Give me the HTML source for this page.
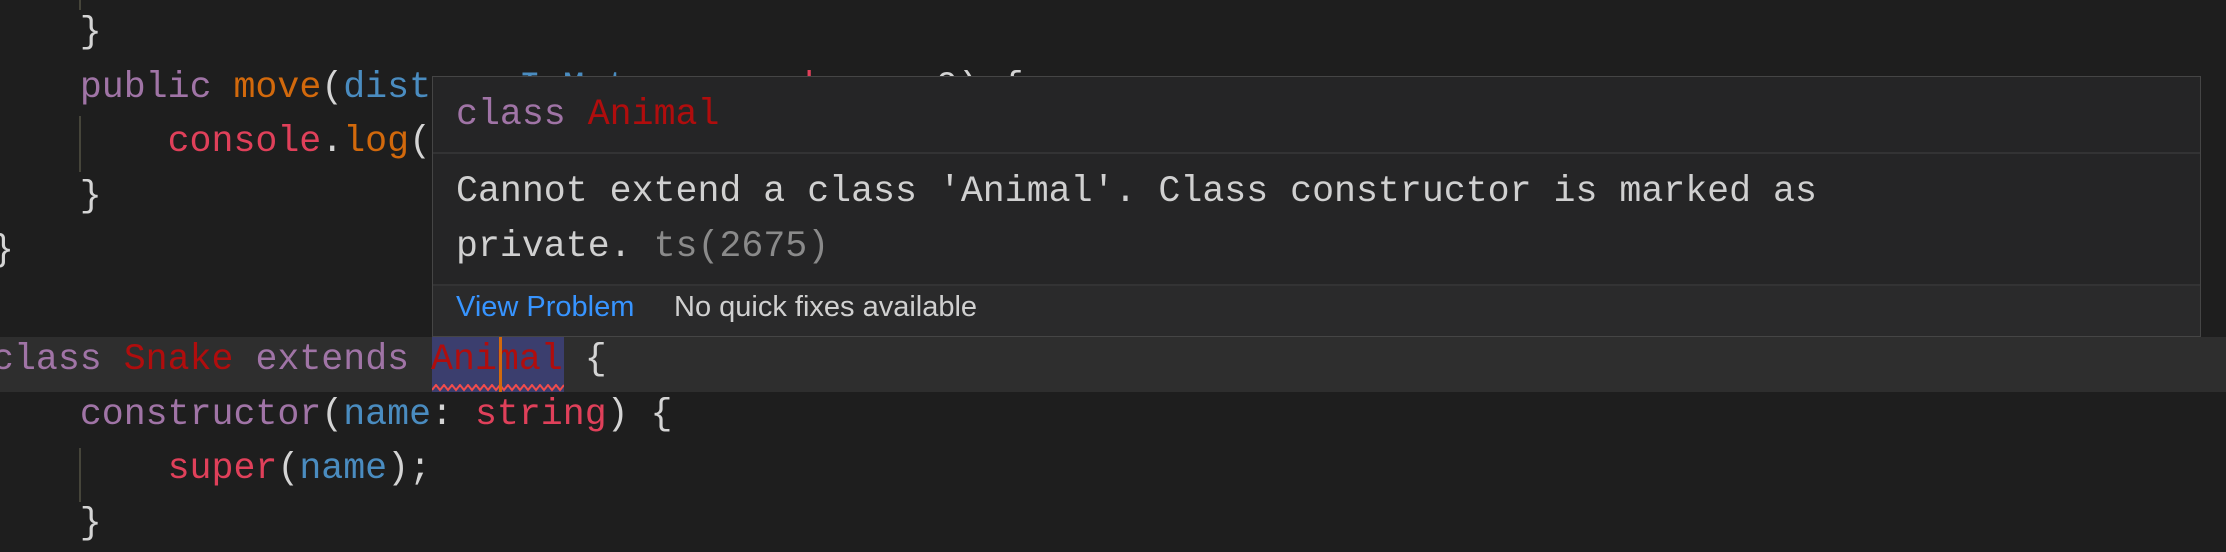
<!DOCTYPE html>
<html><head><meta charset="utf-8"><style>
html,body{margin:0;padding:0;}
body{width:2226px;height:534px;background:#1e1e1e;position:relative;overflow:hidden;font-family:"Liberation Mono",monospace;}
.l{position:absolute;left:-8px;height:54.5px;line-height:54.5px;font-size:36.6px;white-space:pre;color:#d4d4d4;}
.p{color:#a074a6}.o{color:#d2690c}.b{color:#4a8cc0}.r{color:#e0405a}.d{color:#b00d0d}.g{color:#d4d4d4}
.guide{position:absolute;left:79px;width:2px;background:#46453a;}
.cur{position:absolute;left:0;top:337px;width:2226px;height:55px;background:#2e2e2e;}
.sel{position:absolute;left:432px;top:337px;width:132px;height:55px;background:#3b3e6e;}
.caret{position:absolute;left:499px;top:337px;width:3px;height:55px;background:#d2690c;}
.hover{position:absolute;left:432px;top:76px;width:1767px;height:259px;background:#252526;border:1px solid #454545;}
.hl{position:absolute;left:23px;font-size:36.6px;white-space:pre;color:#d0d0d0;}
.sep{position:absolute;left:0;right:0;height:2px;background:#333334;}
.foot{position:absolute;left:0;right:0;top:207px;bottom:0;background:#2a2a2b;border-top:2px solid #333334;font-family:"Liberation Sans",sans-serif;font-size:29px;}
</style></head><body>
<div class="guide" style="top:0;height:10px"></div>
<div class="guide" style="top:116px;height:56px"></div>
<div class="guide" style="top:448px;height:54px"></div>
<div class="cur"></div>
<div class="sel"></div>
<div class="l" style="top:-48px">    }</div>
<div class="l" style="top:6px">    }</div>
<div class="l" style="top:61px">    <span class="p">public</span> <span class="o">move</span>(<span class="b">distanceInMeters</span>: <span class="r">number</span> = <span class="g">0</span>) {</div>
<div class="l" style="top:115px">        <span class="r">console</span>.<span class="o">log</span>(`Animal moved ${distanceInMeters}m.`);</div>
<div class="l" style="top:170px">    }</div>
<div class="l" style="top:224px">}</div>
<div class="l" style="top:333px"><span class="p">class</span> <span class="d">Snake</span> <span class="p">extends</span> <span class="d">Animal</span> {</div>
<svg style="position:absolute;left:432px;top:384px" width="132" height="8"><polyline fill="none" stroke="#f14c4c" stroke-width="2" points="0,6 4,1 8,6 12,1 16,6 20,1 24,6 28,1 32,6 36,1 40,6 44,1 48,6 52,1 56,6 60,1 64,6 68,1 72,6 76,1 80,6 84,1 88,6 92,1 96,6 100,1 104,6 108,1 112,6 116,1 120,6 124,1 128,6 132,1"/></svg>
<div class="caret"></div>
<div class="l" style="top:388px">    <span class="p">constructor</span>(<span class="b">name</span>: <span class="r">string</span>) {</div>
<div class="l" style="top:442px">        <span class="r">super</span>(<span class="b">name</span>);</div>
<div class="l" style="top:497px">    }</div>
<div class="hover">
  <div class="hl" style="top:18px;line-height:40px"><span class="p">class</span> <span class="d">Animal</span></div>
  <div class="sep" style="top:75px"></div>
  <div class="hl" style="top:87px;line-height:55px">Cannot extend a class 'Animal'. Class constructor is marked as
private. <span style="color:#8a8a8a">ts(2675)</span></div>
  <div class="foot">
    <span style="position:absolute;left:23px;top:5px;color:#3794ff">View Problem</span>
    <span style="position:absolute;left:241px;top:5px;color:#d0d0d0">No quick fixes available</span>
  </div>
</div>
</body></html>
